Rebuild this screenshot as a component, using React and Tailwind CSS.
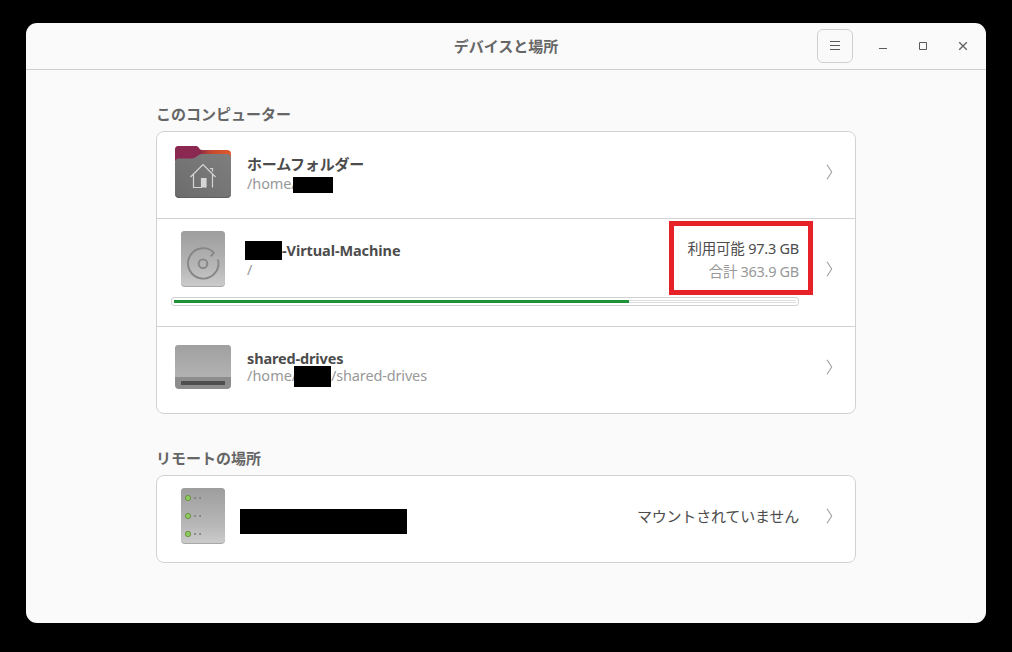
import React from 'react';

const FolderIcon = () => (
  <svg width="60" height="60" viewBox="0 0 60 60" className="block">
    <defs>
      <linearGradient id="tab" x1="0" x2="1">
        <stop offset="0" stopColor="#7a2852" />
        <stop offset="0.45" stopColor="#8d2b45" />
        <stop offset="0.65" stopColor="#c4492f" />
        <stop offset="1" stopColor="#df5a2c" />
      </linearGradient>
      <linearGradient id="front" x1="0" x2="1" y1="1" y2="0">
        <stop offset="0" stopColor="#6c6c6c" />
        <stop offset="1" stopColor="#7e7e7e" />
      </linearGradient>
    </defs>
    <path d="M2 20V9a4 4 0 0 1 4-4h17c3 0 3 4 6 4h25a4 4 0 0 1 4 4v9z" fill="url(#tab)" />
    <path d="M2 20V9a4 4 0 0 1 4-4h16c4 0 4 4 5 6-2 5-5 7-9 7z" fill="#8a2852" />
    <path d="M6 17.500h13c4 0 6-4.500 10-4.500h25a4 4 0 0 1 4 4v36a4 4 0 0 1-4 4H6a4 4 0 0 1-4-4V21.500a4 4 0 0 1 4-4z" fill="url(#front)" />
    <path d="M2.500 54a4 4 0 0 0 3.500 2.500h48a4 4 0 0 0 3.500-2.500" fill="none" stroke="#5f5f5f" />
    <path d="M17.500 36 30 23.500 42.500 36M20.500 33.500v13h8v-9h4.500v9M39.500 33.500v13M37 27.500h2.500v3" fill="none" stroke="#d6d6d6" strokeWidth="1.200" />
    <path d="M28.500 37.500h4.500v9h-4.500z" fill="#d6d6d6" />
  </svg>
);

const DriveBody = ({ id }) => (
  <>
    <defs>
      <linearGradient id={id} x1="0" x2="0" y1="0" y2="1">
        <stop offset="0" stopColor="#9e9e9e" />
        <stop offset="0.65" stopColor="#b6b6b6" />
        <stop offset="1" stopColor="#cbcbcb" />
      </linearGradient>
    </defs>
    <rect x="8" y="2" width="44" height="56" rx="4" fill="#a8a8a8" />
    <rect x="8" y="2" width="44" height="55" rx="4" fill={`url(#${id})`} />
  </>
);

const DiskIcon = () => (
  <svg width="60" height="60" viewBox="0 0 60 60" className="block">
    <DriveBody id="disk" />
    <g fill="none" stroke="#868686" strokeWidth="1.900" strokeLinejoin="round">
      <circle cx="30" cy="34.700" r="4.300" />
      <path d="M37.800 27.300L40.900 23.600A15.200 15.200 0 1 0 44.900 30.500" />
    </g>
  </svg>
);

const RemovableIcon = () => (
  <svg width="60" height="60" viewBox="0 0 60 60" className="block">
    <defs>
      <linearGradient id="removable" x1="0" x2="0" y1="0" y2="1">
        <stop offset="0" stopColor="#a0a0a0" />
        <stop offset="1" stopColor="#b2b2b2" />
      </linearGradient>
    </defs>
    <rect x="2" y="8" width="56" height="44" rx="4" fill="#8d8d8d" />
    <path d="M2 40V12a4 4 0 0 1 4-4h48a4 4 0 0 1 4 4v28z" fill="url(#removable)" />
    <rect x="8" y="44" width="44" height="4" rx="0.500" fill="#4f4f4f" />
  </svg>
);

const ServerIcon = () => (
  <svg width="60" height="60" viewBox="0 0 60 60" className="block">
    <DriveBody id="server" />
    {[12, 30, 48].map((y) => (
      <g key={y}>
        <circle cx="15" cy={y} r="2.700" fill="#8bca5b" stroke="#66883f" strokeWidth="0.800" />
        <rect x="21.200" y={y - 0.9} width="1.800" height="1.800" fill="#808080" />
        <rect x="26.200" y={y - 0.9} width="1.800" height="1.800" fill="#808080" />
      </g>
    ))}
  </svg>
);

const Chevron = () => (
  <svg width="8" height="16" viewBox="0 0 8 16" className="ml-auto mr-[22px] block shrink-0">
    <path d="M2 0.800L6.700 8L2 15.200" fill="none" stroke="#9c9c9c" strokeWidth="1.050" />
  </svg>
);

const Redacted = ({ className }) => <span className={`block shrink-0 bg-black ${className}`} />;

export default function App() {
  return (
    <div className="h-[652px] w-[1012px] overflow-hidden bg-black px-[26px] pt-[23px] font-['Noto_Sans','Noto_Sans_CJK_JP',sans-serif] text-[15px] text-[#4c4c4c]">
      <div className="h-[600px] w-[960px] overflow-hidden rounded-[11px] bg-[#fafafa]">
        <header className="grid h-[47px] grid-cols-[1fr_auto_1fr] items-center border-b border-[#cfcfcf]">
          <span />
          <h1 className="text-[15px] leading-5 font-bold text-[#666] font-['Noto_Sans_CJK_JP',sans-serif]">デバイスと場所</h1>
          <div className="flex items-center justify-end pr-[17px]">
            <button className="mr-[24px] flex h-[34px] w-[36px] items-center justify-center rounded-[6px] border border-[#cfcfcf]">
              <svg width="10" height="10" viewBox="0 0 10 10">
                <path d="M0 .5h10M0 4.500h10M0 8.500h10" stroke="#5a5a5a" />
              </svg>
            </button>
            <svg width="12" height="12" viewBox="0 0 12 12" className="mr-[28px]">
              <path d="M2 8.500h8" stroke="#5a5a5a" />
            </svg>
            <svg width="12" height="12" viewBox="0 0 12 12" className="mr-[28px]">
              <path d="M2.500 2.500h7v7h-7z" fill="none" stroke="#5a5a5a" />
            </svg>
            <svg width="12" height="12" viewBox="0 0 12 12">
              <path d="M2.200 2.200l7.600 7.600M9.800 2.200L2.200 9.800" stroke="#606060" strokeWidth="1.300" />
            </svg>
          </div>
        </header>

        <main className="mx-auto w-[700px] pt-[34px]">
          <h2 className="mb-[7px] h-5 text-[15px] leading-5 font-bold text-[#666] font-['Noto_Sans_CJK_JP',sans-serif]">このコンピューター</h2>
          <section className="rounded-[8px] border border-[#d2d2d2] bg-white">
            <div className="flex h-[86px] items-start pl-4">
              <div className="pt-[9px]"><FolderIcon /></div>
              <div className="ml-[14px] pt-[22px]">
                <p className="h-5 leading-5 font-bold tracking-[-0.200px] font-['Noto_Sans_CJK_JP',sans-serif]">ホームフォルダー</p>
                <p className="flex h-5 text-[14.500px] leading-[18px] text-[#989898]">
                  <span className="w-[46px] tracking-[-0.100px]">/home/</span>
                  <Redacted className="mt-[3px] h-4 w-10" />
                </p>
              </div>
              <div className="ml-auto flex h-[80px] items-center"><Chevron /></div>
            </div>

            <div className="relative border-y border-[#d2d2d2]">
              <div className="flex h-[78px] items-start pl-4">
                <div className="pt-[10px]"><DiskIcon /></div>
                <div className="ml-[12px] pt-[22px]">
                  <p className="flex h-[19px] leading-[19px] font-bold">
                    <Redacted className="h-[19px] w-[37px]" />
                    <span className="whitespace-nowrap text-[14.500px] tracking-[-0.090px]">-Virtual-Machine</span>
                  </p>
                  <p className="pl-[2px] text-[14.500px] leading-[18px] text-[#989898]">/</p>
                </div>
                <div className="ml-auto mr-[26px] pt-[18px] text-right text-[14.500px] tracking-[-0.300px]">
                  <p className="h-[23px] leading-[23px] tracking-[-0.240px]">利用可能 97.3 GB</p>
                  <p className="h-[23px] leading-[23px] text-[#989898]">合計 363.9 GB</p>
                </div>
                <div className="mt-[42px] mr-[22px] w-[8px]"><Chevron /></div>
              </div>
              <div className="h-[29px] pl-[14px]">
                <div className="h-[9px] w-[628px] rounded-[3px] border border-[#d0d0d0] bg-white p-[2px]">
                  <div className="flex h-[3px] border-y border-[#dedede]">
                    <span className="-my-px block h-[3px] w-[455px] bg-[#1e9238]" />
                  </div>
                </div>
              </div>
              <div className="absolute top-[2px] left-[512px] h-[74px] w-[144px] border-[5px] border-[#e62228]" />
            </div>

            <div className="flex h-[86px] items-start pl-4">
              <div className="pt-[10px]"><RemovableIcon /></div>
              <div className="ml-[14px] pt-[22px]">
                <p className="h-[17px] text-[14.500px] leading-[18px] font-bold tracking-[-0.150px]">shared-drives</p>
                <p className="flex h-5 text-[14.500px] leading-[18px] text-[#989898]">
                  <span className="w-[47px]">/home/</span>
                  <Redacted className="h-[21px] w-[37px]" />
                  <span className="whitespace-nowrap tracking-[-0.150px]">/shared-drives</span>
                </p>
              </div>
              <div className="ml-auto flex h-[80px] items-center"><Chevron /></div>
            </div>
          </section>

          <h2 className="mt-[34px] mb-[7px] h-5 text-[15px] leading-5 font-bold text-[#666] font-['Noto_Sans_CJK_JP',sans-serif]">リモートの場所</h2>
          <section className="flex h-[88px] items-start rounded-[8px] border border-[#d2d2d2] bg-white pl-4">
            <div className="pt-[10px]"><ServerIcon /></div>
            <Redacted className="mt-[33px] ml-[7px] h-[25px] w-[167px]" />
            <p className="mt-[30px] mr-[26px] ml-auto text-[15px] leading-5 tracking-[-0.180px] font-['Noto_Sans_CJK_JP',sans-serif]">マウントされていません</p>
            <div className="flex h-[80px] items-center"><Chevron /></div>
          </section>
        </main>
      </div>
    </div>
  );
}
